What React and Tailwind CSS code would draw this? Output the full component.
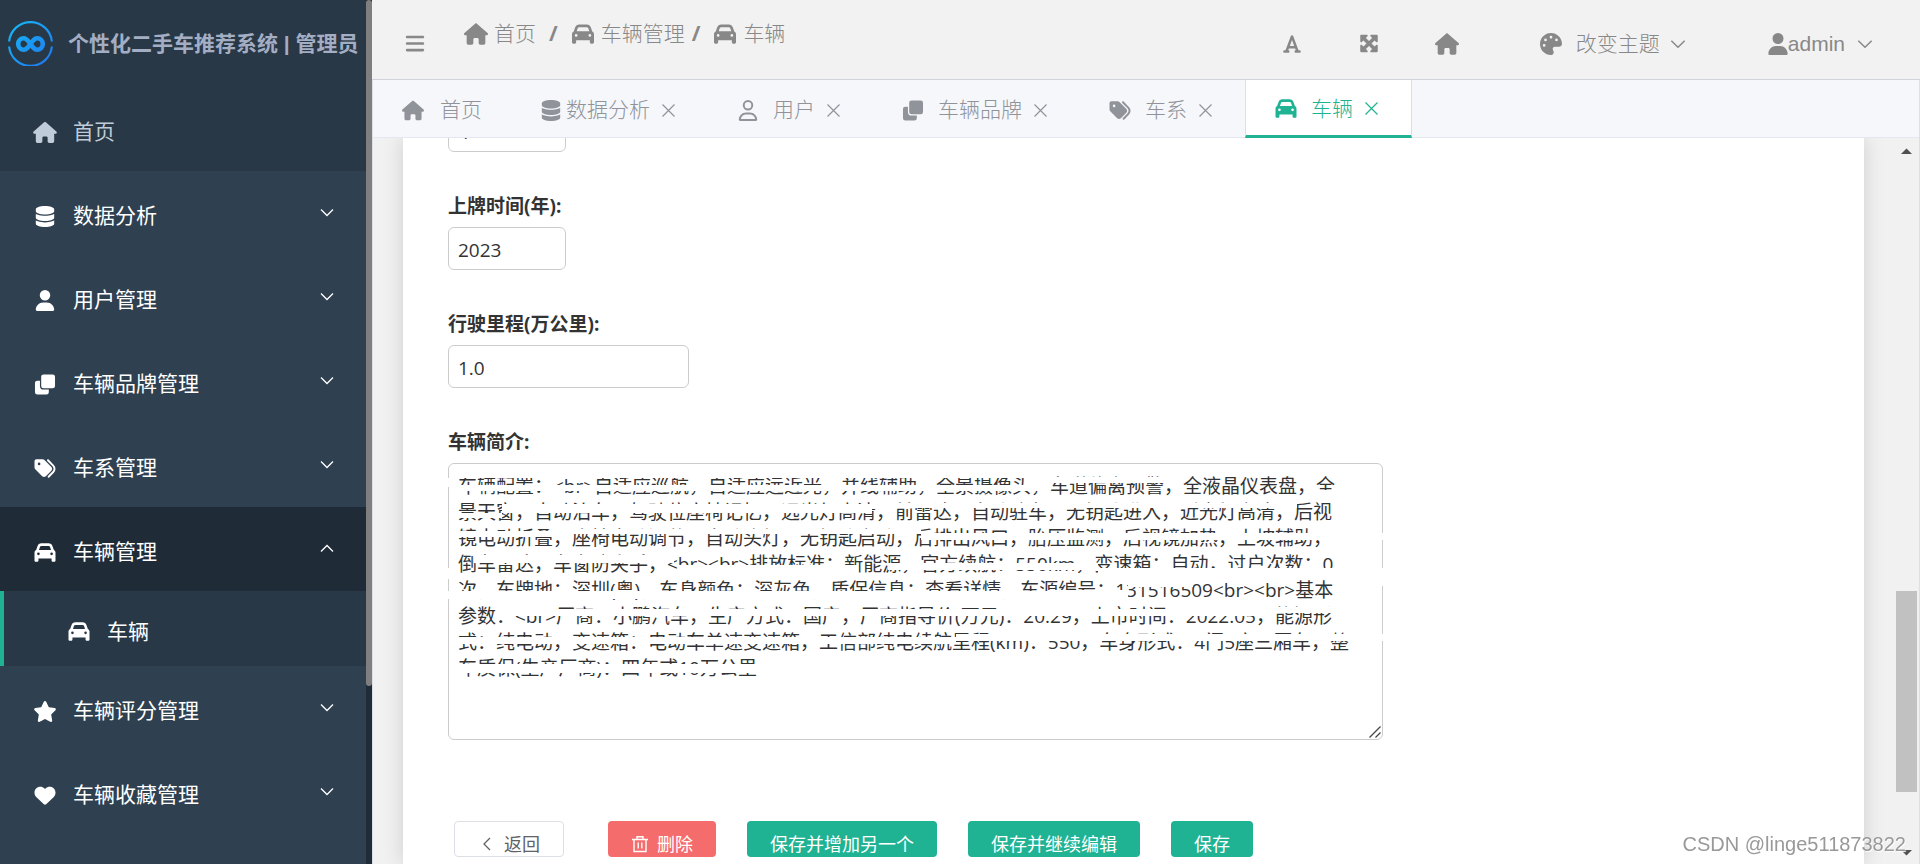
import React from 'react';
import {
  FaHouse,
  FaDatabase,
  FaUser,
  FaRegUser,
  FaTags,
  FaCar,
  FaStar,
  FaHeart,
  FaBars,
  FaFont,
  FaMaximize,
  FaPalette,
} from 'react-icons/fa6';

const CloneIcon = ({ className }) => (
  <svg className={className} viewBox="0 0 22 22" fill="currentColor">
    <rect x="7" y="0.5" width="14.5" height="14.5" rx="2.5" />
    <path d="M5.7 7H3A2.5 2.5 0 0 0 .5 9.5V19A2.5 2.5 0 0 0 3 21.5h9.500A2.5 2.5 0 0 0 15 19v-2.7H9.5a3.8 3.8 0 0 1-3.8-3.8z" />
  </svg>
);

const menus = [
  { name: '数据分析', icon: FaDatabase },
  { name: '用户管理', icon: FaUser },
  { name: '车辆品牌管理', icon: CloneIcon },
  { name: '车系管理', icon: FaTags },
  { name: '车辆管理', icon: FaCar, open: true, children: [{ name: '车辆', icon: FaCar }] },
  { name: '车辆评分管理', icon: FaStar },
  { name: '车辆收藏管理', icon: FaHeart },
];

const tabs = [
  { name: '首页', icon: FaHouse, gap: 'gap-4', fixed: true },
  { name: '数据分析', icon: FaDatabase, gap: 'gap-1' },
  { name: '用户', icon: FaRegUser, gap: 'gap-[14px]' },
  { name: '车辆品牌', icon: CloneIcon, gap: 'gap-[14px]' },
  { name: '车系', icon: FaTags, gap: 'gap-[14px]' },
  { name: '车辆', icon: FaCar, gap: 'gap-[14px]', active: true },
];

const crumbs = [
  { name: '首页', icon: FaHouse, slash: 'ml-[13px]' },
  { name: '车辆管理', icon: FaCar, slash: 'ml-[7px]' },
  { name: '车辆', icon: FaCar },
];

const intro = [
  '车辆配置：<br>自适应巡航，自适应远近光，并线辅助，全景摄像头，车道偏离预警，全液晶仪表盘，全',
  '景天窗，自动泊车，驾驶位座椅记忆，远光灯高清，前雷达，自动驻车，无钥匙进入，近光灯高清，后视',
  '镜电动折叠，座椅电动调节，自动头灯，无钥匙启动，后排出风口，胎压监测，后视镜加热，上坡辅助，',
  '倒车雷达，车窗防夹手，<br><br>排放标准：新能源，官方续航：550km，变速箱：自动，过户次数：0',
  '次，车牌地：深圳(粤)，车身颜色：深灰色，质保信息：查看详情，车源编号：131516509<br><br>基本',
  '参数：<br>厂商：小鹏汽车，生产方式：国产，厂商指导价(万元)：20.29，上市时间：2022.05，能源形',
  '式：纯电动，变速箱：电动车单速变速箱，工信部纯电续航里程(km)：550，车身形式：4门5座三厢车，整',
  '车质保(生产厂商)：四年或10万公里',
].join('\n');

// torn strips over the intro text: [left, top, width, height]
const strips = [
  [0, 15, 8, 9],
  [8, 8, 590, 7],
  [8, 22, 590, 6],
  [598, 14, 130, 6],
  [865, 27, 30, 9],
  [8, 50, 46, 5],
  [54, 41, 370, 9],
  [424, 40, 425, 5],
  [8, 68, 115, 6],
  [123, 66, 350, 5],
  [473, 70, 462, 7],
  [26, 92, 200, 8],
  [230, 102, 180, 9],
  [440, 100, 210, 7],
  [650, 105, 285, 7],
  [0, 105, 8, 11],
  [0, 128, 600, 8],
  [600, 127, 80, 9],
  [680, 118, 65, 6],
  [927, 111, 8, 12],
  [50, 146, 775, 7],
  [825, 144, 75, 6],
  [8, 174, 500, 7],
  [508, 171, 427, 7],
  [8, 201, 320, 9],
];

const Chevron = ({ className, d = 'M1 1.5l6 6 6-6' }) => (
  <svg className={className} viewBox="0 0 14 9" fill="none" stroke="currentColor" strokeWidth="1.3">
    <path d={d} />
  </svg>
);

const CloseIcon = () => (
  <svg className="w-[21px] h-[21px] ml-2" viewBox="0 0 21 21" fill="none" stroke="currentColor" strokeWidth="1.2">
    <path d="M4.5 4.5l12 12M16.5 4.5l-12 12" />
  </svg>
);

const Logo = () => (
  <svg className="w-[45px] h-[45px] shrink-0" viewBox="0 0 45 45" fill="none">
    <defs>
      <linearGradient id="ring" x1="0" y1="0" x2="45" y2="45" gradientUnits="userSpaceOnUse">
        <stop offset="0" stopColor="#14bdf6" />
        <stop offset="1" stopColor="#2173ef" />
      </linearGradient>
    </defs>
    <path d="M1.1 20.5a21.5 21.5 0 0 1 42.8 0M1.1 25.5a21.5 21.5 0 0 0 42.8 0" stroke="url(#ring)" strokeWidth="2.2" />
    <path
      d="M22.5 23c-2.6-3.4-4-5.7-6.6-5.7a5.7 5.7 0 0 0 0 11.4c2.6 0 4.2-2.3 6.6-5.7s4-5.7 6.6-5.7a5.7 5.7 0 0 1 0 11.4c-2.6 0-4.2-2.3-6.6-5.7z"
      stroke="url(#ring)"
      strokeWidth="4.6"
      strokeLinejoin="round"
    />
  </svg>
);

const Sidebar = () => (
  <aside className="flex w-[372px] shrink-0 bg-[#202b38]">
    <div className="flex-1 overflow-hidden bg-[#2f4050] text-[21px] text-white">
      <div className="flex h-[87px] items-center gap-[15px] bg-[#293846] pl-2 text-[#a3aec4]">
        <Logo />
        <h1 className="whitespace-nowrap font-['Liberation_Sans','Noto_Sans_CJK_SC',sans-serif] font-bold">
          个性化二手车推荐系统 | 管理员
        </h1>
      </div>
      <nav>
        <a href="#home" className="flex h-[84px] items-center gap-4 bg-[#293846] pl-[33px] pt-[6px] text-[#bfcbd9]">
          <FaHouse className="w-6 h-[21px]" />
          首页
        </a>
        {menus.map((menu) => (
          <div key={menu.name}>
            <button
              className={`flex h-[84px] w-full items-center gap-4 pl-[33px] pr-8 pt-[6px] text-left ${menu.open ? 'bg-[#202b38]' : ''}`}
            >
              <menu.icon className="w-6 h-[21px]" />
              <span className="flex-1">{menu.name}</span>
              <Chevron className="mb-2 w-[14px] h-[9px]" d={menu.open ? 'M1 7.5l6-6 6 6' : 'M1 1.5l6 6 6-6'} />
            </button>
            {menu.children?.map((item) => (
              <a
                key={item.name}
                href="#car"
                className="flex h-[75px] items-center gap-4 border-l-4 border-[#1fb394] bg-[#293846] pl-[63px] pt-[6px]"
              >
                <item.icon className="w-6 h-[21px]" />
                {item.name}
              </a>
            ))}
          </div>
        ))}
      </nav>
    </div>
    <div className="h-[686px] w-[6px] rounded-full bg-[#7f7f7f]" />
  </aside>
);

const Header = () => (
  <header className="flex h-20 shrink-0 items-center border-b border-[#d0d3dc] bg-[#f2f2f2] pl-[33px] pr-[47px] text-[21px] font-light text-[#888]">
    <button aria-label="menu" className="mt-2">
      <FaBars className="w-5 h-[21px]" />
    </button>
    <nav className="mb-3 ml-[39px] flex flex-1 items-center">
      {crumbs.map((crumb) => (
        <React.Fragment key={crumb.name}>
          <a href="#crumb" className="flex items-center gap-[6px]">
            <crumb.icon className="w-6 h-[22px]" />
            {crumb.name}
          </a>
          {crumb.slash && <span className={`mr-[13px] font-bold ${crumb.slash}`}>/</span>}
        </React.Fragment>
      ))}
    </nav>
    <div className="mt-2 flex items-center">
      <button aria-label="font" className="mr-[57px]">
        <FaFont className="w-5 h-5" />
      </button>
      <button aria-label="fullscreen" className="mr-[56px]">
        <FaMaximize className="w-5 h-[21px]" />
      </button>
      <button aria-label="home" className="mr-[81px]">
        <FaHouse className="w-6 h-[22px]" />
      </button>
      <button className="mr-[82px] flex items-center">
        <FaPalette className="mr-[14px] w-[22px] h-[22px]" />
        改变主题
        <Chevron className="ml-2.5 w-4 h-2.5" />
      </button>
      <button className="flex items-center font-['Liberation_Sans']">
        <FaUser className="w-5 h-[22px]" />
        admin
        <Chevron className="ml-3 w-4 h-2.5" />
      </button>
    </div>
  </header>
);

const Tabs = () => (
  <div className="flex h-[58px] shrink-0 border-b border-[#e4e7ed] bg-[#f5f7fb] text-[21px] font-light text-[#909399]">
    {tabs.map((tab) => (
      <button
        key={tab.name}
        className={`flex h-[58px] items-center px-[29px] pt-[2px] ${
          tab.active ? 'border-x border-b-[3px] border-x-[#dcdfe6] border-b-[#1fb394] bg-white text-[#1fb394]' : ''
        }`}
      >
        <span className={`flex items-center ${tab.gap}`}>
          <tab.icon className="w-[22px] h-[21px]" />
          {tab.name}
        </span>
        {!tab.fixed && <CloseIcon />}
      </button>
    ))}
  </div>
);

const Field = ({ id, label, children }) => (
  <div className="mb-[33px]">
    <label htmlFor={id} className="flex h-[42px] items-center font-bold">
      {label}
    </label>
    {children}
  </div>
);

const inputClass = 'block h-[43px] rounded-[6px] border border-[#ccc] bg-white px-[9px] pt-[2px]';
const saveClass = 'h-9 overflow-hidden rounded bg-[#1fb394] px-[23px] pt-2 text-white';

const CarForm = () => (
  <form className="h-full w-full bg-white px-[45px] text-[19px] text-[#333] shadow-[0_0_20px_rgba(0,0,0,0.14)]">
    <div className="mb-[33px] flex h-[14px] items-end overflow-hidden">
      <input aria-label="座位数" defaultValue="4" className={`${inputClass} w-[118px] shrink-0`} />
    </div>
    <Field id="year" label="上牌时间(年):">
      <input id="year" defaultValue="2023" className={`${inputClass} w-[118px]`} />
    </Field>
    <Field id="mileage" label="行驶里程(万公里):">
      <input id="mileage" defaultValue="1.0" className={`${inputClass} w-[241px]`} />
    </Field>
    <Field id="intro" label="车辆简介:">
      <div className="relative w-[935px] max-w-full">
        <textarea
          id="intro"
          defaultValue={intro}
          className="block h-[277px] w-full resize-none overflow-hidden whitespace-pre rounded-[6px] border border-[#ccc] bg-white px-[9px] py-[9px] leading-[26px]"
        />
        <div className="pointer-events-none absolute inset-0">
          {strips.map(([left, top, width, height]) => (
            <i key={`${left}-${top}`} className="absolute bg-white" style={{ left, top, width, height }} />
          ))}
        </div>
        <svg className="absolute bottom-[2px] right-[2px] w-3 h-3" viewBox="0 0 12 12" stroke="#444" strokeWidth="1.3">
          <path d="M0.5 11.5l11-11M6.5 11.5l5-5" />
        </svg>
      </div>
    </Field>
    <div className="ml-[6px] mt-[81px] flex gap-[31px] text-[18px] leading-[30px]">
      <button
        type="button"
        className="mr-[13px] flex h-9 items-center overflow-hidden rounded border border-[#dcdfe6] px-[23px] pt-[10px] text-[#606266]"
      >
        <svg className="mr-2 w-[18px] h-[18px]" viewBox="0 0 18 18" fill="none" stroke="currentColor" strokeWidth="1.3">
          <path d="M12 3L6 9l6 6" />
        </svg>
        返回
      </button>
      <button type="button" className="flex h-9 items-center overflow-hidden rounded bg-[#f56c6c] px-[23px] pt-[10px] text-white">
        <svg className="mr-2 w-[18px] h-[18px]" viewBox="0 0 18 18" fill="none" stroke="currentColor" strokeWidth="1.4">
          <path d="M1 4.5h16M6 4V1.7h6V4M3 4.5v12h12v-12M7.2 7.5v6M10.8 7.5v6" />
        </svg>
        删除
      </button>
      <button type="button" className={saveClass}>保存并增加另一个</button>
      <button type="button" className={saveClass}>保存并继续编辑</button>
      <button type="button" className={saveClass}>保存</button>
    </div>
  </form>
);

const App = () => (
  <div className="flex h-screen overflow-hidden font-['Open_Sans','Noto_Sans_CJK_SC',sans-serif]">
    <Sidebar />
    <div className="flex min-w-0 flex-1 flex-col">
      <Header />
      <div className="flex min-h-0 flex-1 flex-col border-x border-[#dcdfe6]">
        <Tabs />
        <main className="flex min-h-0 flex-1 bg-[#f1f1f1]">
          <div className="min-w-0 flex-1 overflow-hidden pl-[30px] pr-8">
            <CarForm />
          </div>
          <div className="mr-[2px] flex w-[21px] flex-col items-center bg-[#f1f1f1]">
            <svg className="mt-[10px] w-[11px] h-[6px]" viewBox="0 0 11 6" fill="#505050">
              <path d="M0 6L5.5 0.5 11 6z" />
            </svg>
            <div className="mt-[437px] h-[201px] w-full bg-[#c1c1c1]" />
            <svg className="mb-2 mt-auto w-[11px] h-[6px]" viewBox="0 0 11 6" fill="#505050">
              <path d="M0 0l5.5 5.5L11 0z" />
            </svg>
          </div>
        </main>
      </div>
    </div>
    <div className="pointer-events-none fixed bottom-[5px] right-[14px] font-['Liberation_Sans'] text-[20px] text-[#999] [text-shadow:1px_1px_1px_#fff]">
      CSDN @linge511873822
    </div>
  </div>
);

export default App;
